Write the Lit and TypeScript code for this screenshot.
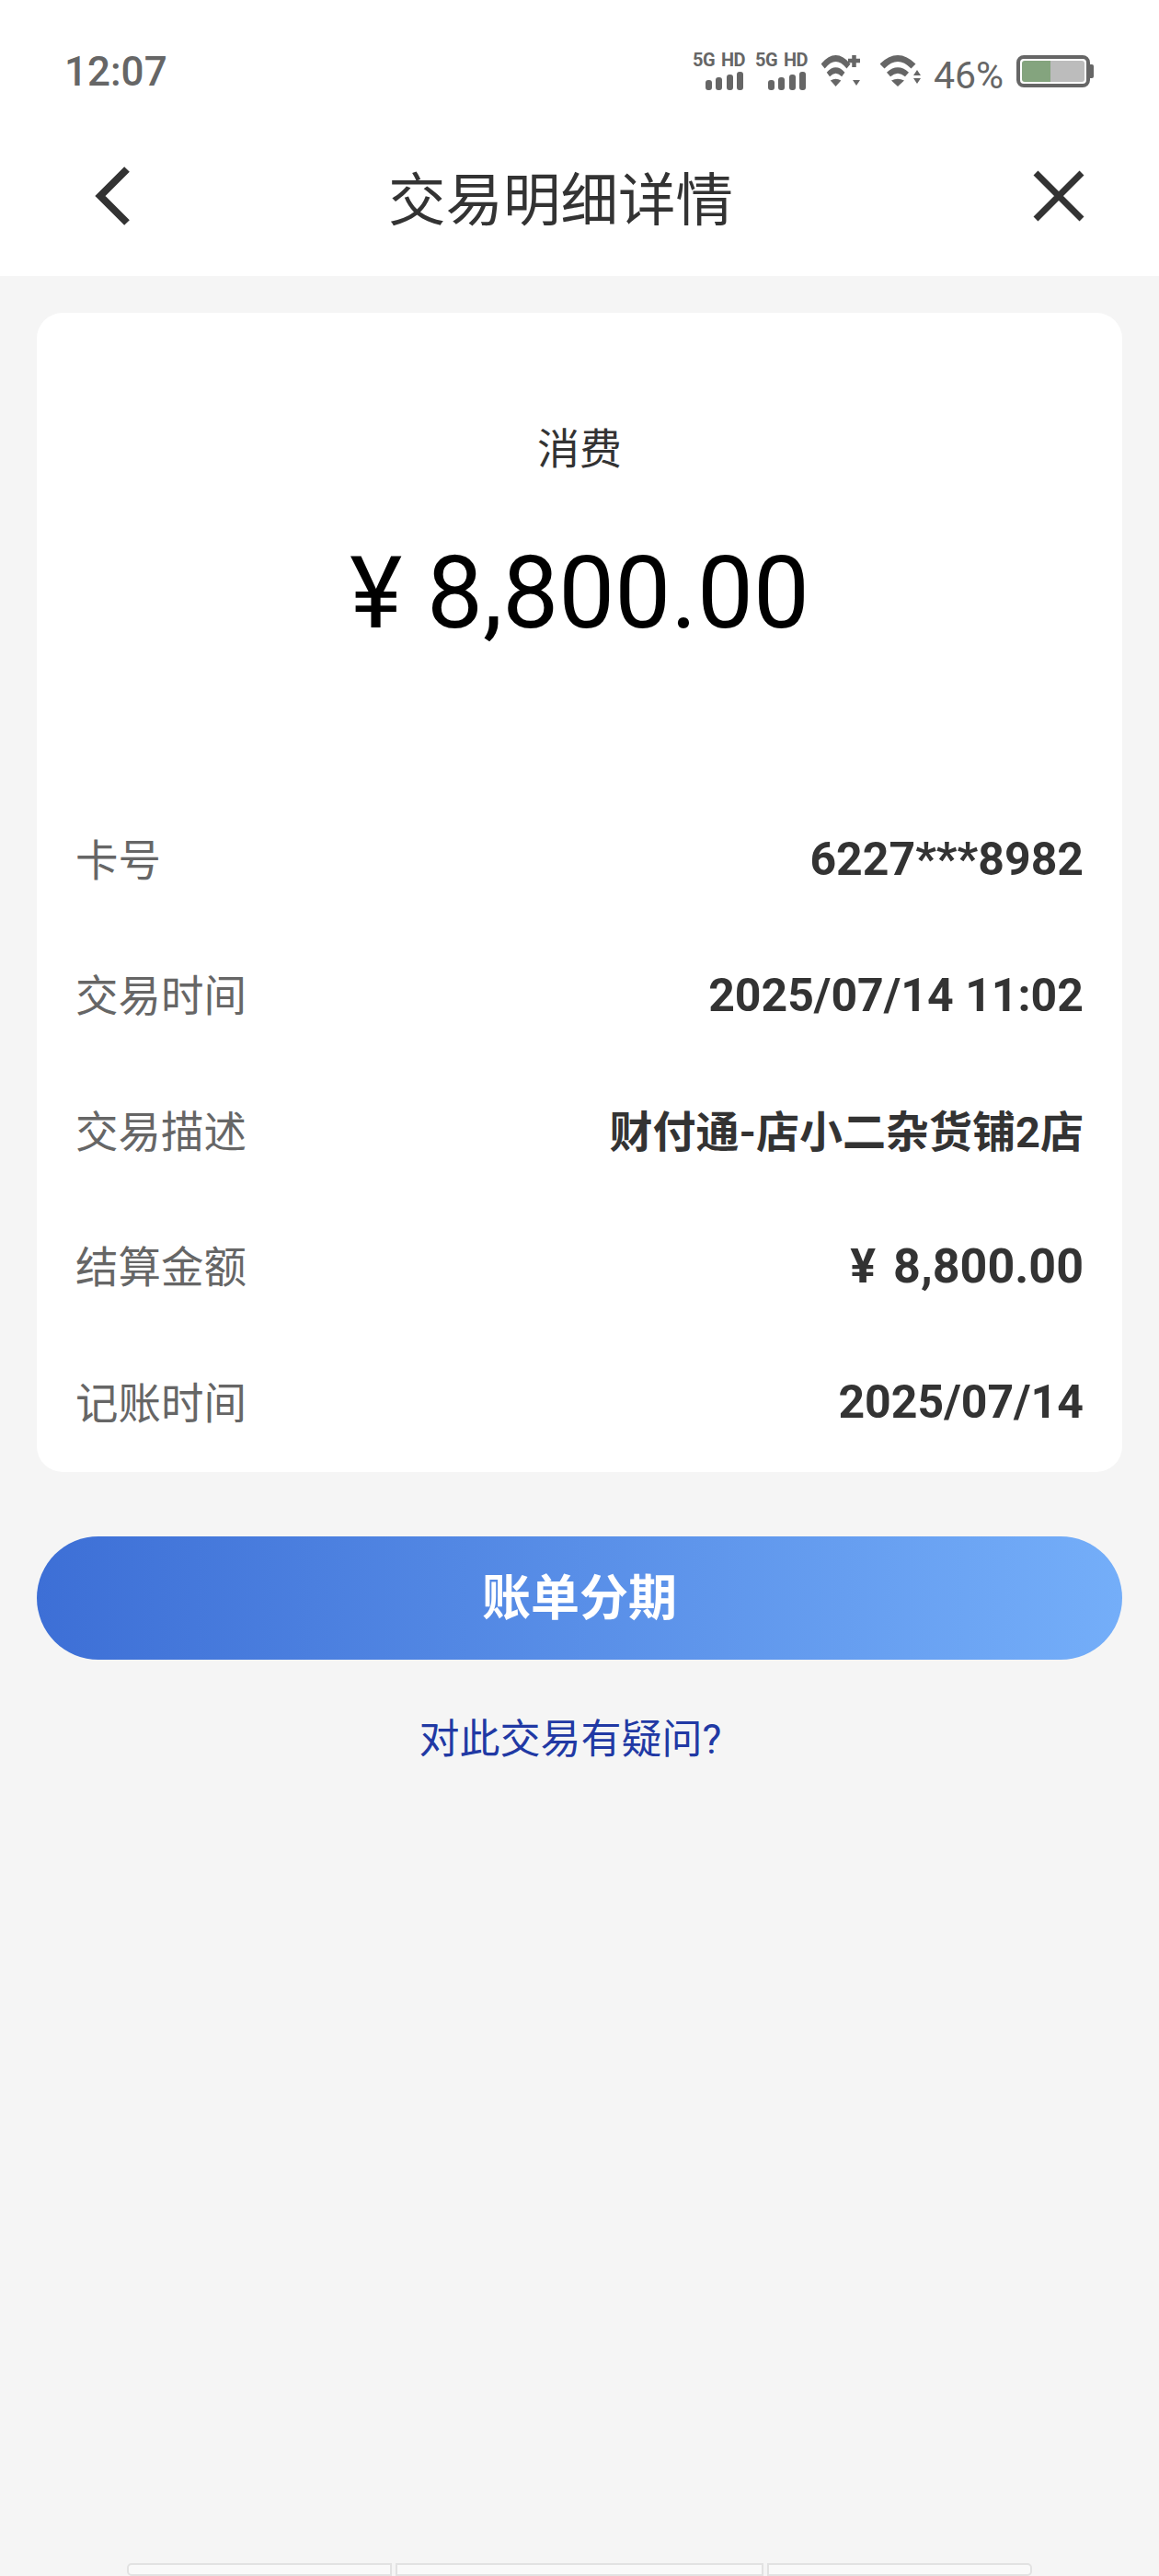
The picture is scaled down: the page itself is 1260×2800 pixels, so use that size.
import { LitElement, html, css, svg } from "lit";
import { customElement } from "lit/decorators.js";

const rows: [string, string, string][] = [
  ["卡号", "6227***8982", ""],
  ["交易时间", "2025/07/14 11:02", ""],
  ["交易描述", "财付通-店小二杂货铺2店", "cjk"],
  ["结算金额", "¥ 8,800.00", "money"],
  ["记账时间", "2025/07/14", ""],
];

const wifiArcs = svg`
  <path d="M2 12 Q19 -5 36 12" fill="none" stroke="#666" stroke-width="7"/>
  <path d="M9 21 Q19 12 29 21" fill="none" stroke="#666" stroke-width="6"/>
  <path d="M12 27.5 Q19 24 26 27.5 L19 34Z" fill="#666"/>`;

@customElement("app-root")
export class AppRoot extends LitElement {
  static styles = css`
    :host {
      display: block;
      width: 1260px;
      height: 2800px;
      background: #f5f5f5;
      font-family: Roboto, "Noto Sans CJK SC", sans-serif;
      overflow: hidden;
      position: relative;
    }
    .top { background: #fff; height: 300px; display: flex; flex-direction: column; }
    .status {
      height: 140px;
      display: flex;
      align-items: flex-start;
      padding: 57px 71px 0 70px;
      box-sizing: border-box;
      color: #666;
    }
    .time { font-size: 44px; line-height: 38px; padding-top: 2px; font-weight: 500; flex: 1; }
    .icons { display: flex; align-items: flex-start; }
    .sig { width: 57px; margin-right: 11px; display: flex; flex-direction: column; align-items: stretch; }
    .sig-t {
      font: 700 20px/17px Roboto, sans-serif;
      letter-spacing: -0.5px;
      white-space: nowrap;
      display: flex;
      justify-content: space-between;
      height: 21px;
    }
    .sig svg { display: block; margin-left: 14px; }
    .wifi1 { margin-left: 4px; margin-top: 3px; display: block; }
    .wifi2 { margin-left: 22px; margin-top: 3px; display: block; }
    .pct { font-size: 41px; line-height: 40px; margin: 5px 0 0 14px; width: 90px; }
    .batt {
      width: 80px; height: 35px; box-sizing: border-box; margin-top: 3px;
      border: 4px solid #666; border-radius: 8px; padding: 2px;
      display: flex; background: #fff;
    }
    .batt i { display: block; width: 46%; background: #84a47e; border-radius: 3px 0 0 3px; }
    .batt b { display: block; flex: 1; background: #bcbcbc; border-radius: 0 3px 3px 0; }
    .nub { width: 4px; height: 15px; background: #666; margin-top: 13px; border-radius: 0 2px 2px 0; }
    .nav { flex: 1; display: flex; align-items: center; justify-content: space-between; padding: 0 81px 14px 102px; }
    .nav h1 { margin: 11px 46px 0 0; font-size: 62.5px; line-height: 80px; font-weight: 400; color: #333; }
    .nav svg { display: block; }
    .card {
      margin: 40px 40px 0;
      height: 1260px;
      box-sizing: border-box;
      background: #fff;
      border-radius: 28px;
      display: flex;
      flex-direction: column;
      padding: 0 42px;
    }
    .kind { margin-top: 118px; text-align: center; font-size: 46px; line-height: 60px; color: #333; }
    .amt { margin-top: 62px; text-align: center; font-size: 108.5px; line-height: 130px; color: #000; }
    .rows { margin-top: 171px; display: flex; flex-direction: column; gap: 47.5px; }
    .row { display: flex; justify-content: space-between; align-items: center; height: 100px; }
    .l { font-size: 46.5px; color: #666; }
    .v { font-size: 50px; font-weight: 700; color: #333; padding-top: 6px; }
    .v.cjk { font-size: 47px; padding-top: 0; }
    .v.money { font-size: 52px; word-spacing: 6px; }
    .btn {
      margin: 70px 40px 0;
      height: 134px;
      box-sizing: border-box;
      padding-bottom: 8px;
      border-radius: 67px;
      background: linear-gradient(90deg, #3d6fd6, #74aef9);
      color: #fff;
      font-size: 53px;
      font-weight: 700;
      display: flex; align-items: center; justify-content: center;
    }
    .link { margin: 56px 20px 0 0; text-align: center; font-size: 44px; line-height: 62px; color: #2139a4; }
    .home {
      position: absolute; left: 138px; top: 2786px; display: flex; gap: 4px; height: 14px;
    }
    .home span {
      display: block; height: 10px; border: 2px solid #e2e2e2; background: #f9f9f9;
    }
    .home span:first-child { border-radius: 5px 0 0 5px; }
    .home span:last-child { border-radius: 0 5px 5px 0; }
  `;

  private sig() {
    return html`<div class="sig">
      <div class="sig-t"><span>5G</span><span>HD</span></div>
      <svg width="42" height="20" viewBox="0 0 42 20" fill="#666">
        <rect x="0" y="9" width="7" height="11" rx="3"/>
        <rect x="11" y="6" width="7" height="14" rx="3"/>
        <rect x="23" y="3" width="7" height="17" rx="3"/>
        <rect x="34" y="0" width="7" height="20" rx="3"/>
      </svg>
    </div>`;
  }

  render() {
    return html`
      <div class="top">
        <div class="status">
          <div class="time">12:07</div>
          <div class="icons">
            ${this.sig()}${this.sig()}
            <svg class="wifi1" width="42" height="34" viewBox="0 0 42 34">
              <g transform="scale(.82 1)">${wifiArcs}</g>
              <path d="M29 6h13M35.5 0v13" stroke="#666" stroke-width="4.5" fill="none"/>
              <path d="M34 27h8l-4 6z" fill="#666"/>
            </svg>
            <svg class="wifi2" width="44" height="34" viewBox="0 0 44 34">
              ${wifiArcs}
              <path d="M36 22l4 -6 4 6zM36 25h8l-4 6z" fill="#666"/>
            </svg>
            <div class="pct">46%</div>
            <div class="batt"><i></i><b></b></div>
            <div class="nub"></div>
          </div>
        </div>
        <div class="nav">
          <svg width="40" height="64" viewBox="0 0 40 64">
            <path d="M36 3 L7 32 L36 61" fill="none" stroke="#333" stroke-width="8"/>
          </svg>
          <h1>交易明细详情</h1>
          <svg width="56" height="56" viewBox="0 0 56 56">
            <path d="M3 3 L53 53 M53 3 L3 53" fill="none" stroke="#333" stroke-width="7"/>
          </svg>
        </div>
      </div>
      <div class="card">
        <div class="kind">消费</div>
        <div class="amt">¥ 8,800.00</div>
        <div class="rows">
          ${rows.map(([l, v, k]) => html`<div class="row"><span class="l">${l}</span><span class="v ${k}">${v}</span></div>`)}
        </div>
      </div>
      <div class="btn">账单分期</div>
      <div class="link">对此交易有疑问?</div>
      <div class="home">
        <span style="width:284px"></span><span style="width:396px"></span><span style="width:284px"></span>
      </div>
    `;
  }
}
